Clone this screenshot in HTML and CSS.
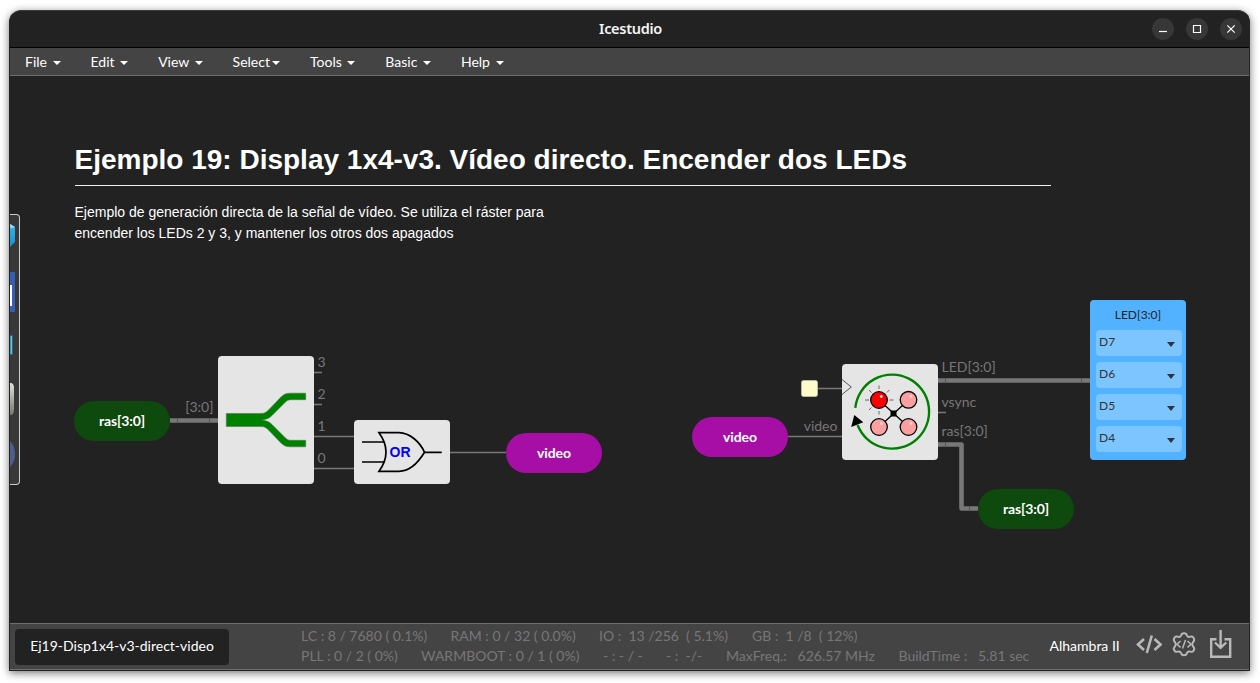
FILE: index.html
```html
<!DOCTYPE html>
<html lang="es">
<head>
<meta charset="utf-8">
<title>Icestudio</title>
<link rel="stylesheet" href="styles.css">
</head>
<body>
<div class="window">
  <header class="titlebar">
    <span class="side"></span>
    <span class="title">Icestudio</span>
    <div class="side controls">
      <svg width="22" height="22"><circle cx="11" cy="11" r="11"/><path d="M7 13.5h8"/></svg>
      <svg width="22" height="22"><circle cx="11" cy="11" r="11"/><path d="M7.5 7.5h7v7h-7z"/></svg>
      <svg width="22" height="22"><circle cx="11" cy="11" r="11"/><path d="M7.3 7.3l7.4 7.4M14.7 7.3l-7.4 7.4"/></svg>
    </div>
  </header>
  <nav class="menubar">
    <span class="menu">File <i class="caret"></i></span>
    <span class="menu">Edit <i class="caret"></i></span>
    <span class="menu">View <i class="caret"></i></span>
    <span class="menu">Select<i class="caret"></i></span>
    <span class="menu">Tools <i class="caret"></i></span>
    <span class="menu">Basic <i class="caret"></i></span>
    <span class="menu">Help <i class="caret"></i></span>
  </nav>
  <main class="canvas">
    <section class="note">
      <h1>Ejemplo 19: Display 1x4-v3. Vídeo directo. Encender dos LEDs</h1>
      <p>Ejemplo de generación directa de la señal de vídeo. Se utiliza el ráster para<br>encender los LEDs 2 y 3, y mantener los otros dos apagados</p>
    </section>

    <svg class="diagram" viewBox="10 76 1239 547" width="1239" height="547">
      <g class="bus">
        <path d="M170 420.5H218"/>
        <path d="M938 380.5H1090"/>
        <path d="M938 444.5H961.5V508.5H978"/>
      </g>
      <g class="wire">
        <path d="M314 372.5h8M314 404.5h8M314 436.5h40M314 468.5h40M450 452.5h56M788 436.5h54M818 388.5h24M938 412.5h8"/>
      </g>
      <g class="joint">
        <path d="M177.500 418v5M209.500 418v5M945.500 378v5M1081.500 378v5M945.500 442v5M969.500 506v5"/>
      </g>
      <g class="block">
        <rect x="218" y="356" width="96" height="128" rx="4"/>
        <rect x="354" y="420" width="96" height="64" rx="4"/>
        <rect x="842" y="364" width="96" height="96" rx="4"/>
      </g>
      <rect class="clock" x="801.500" y="380.500" width="16" height="16" rx="2"/>
      <path class="clock-port" d="M842 379.500L851.300 387L842 394.500"/>

      <path class="splitter" d="M226.300 413.500H261C265 413.500 267 411.500 269 409.500L281 397C284 394.200 286 393.200 290 393.200H305.700V399.700H291C288.500 399.700 287 400.500 285.500 402L272.500 415C269 418.500 267 419.200 262 420C267 420.800 269 421.500 272.500 425L285.500 438C287 439.500 288.500 440.300 291 440.300H305.700V446.800H290C286 446.800 284 445.800 281 443L269 430.500C267 428.500 265 426.500 261 426.500H226.300Z"/>

      <g class="gate">
        <path d="M379 432.700H399C410 433 420 442 424.500 452.300C418 463 409 471.300 399 471.300H379Q393 452 379 432.700Z"/>
        <path d="M362 442H384.500M362 462H384.500M424.500 452.300H441.700"/>
        <text x="389.600" y="456.800">OR</text>
      </g>

      <path class="sweep" d="M855.300 407.800A37 37 0 1 1 857.600 425"/>
      <path d="M854.300 415L863.300 422.300L851.200 427Z"/>
      <path class="rays" d="M879 385.500v3.500M879 411v3.500M865 400h4M889.500 400h4M869 390l2.500 2.500M889.300 390l-2.500 2.500M869 410l2.500-2.500"/>
      <g class="leds">
        <path d="M879 400L908.500 427M908.500 400L879 427"/>
        <circle class="on" cx="879" cy="400" r="8.300"/>
        <circle cx="908.500" cy="399.800" r="8.300"/>
        <circle cx="879" cy="427" r="8.300"/>
        <circle cx="908.500" cy="427" r="8.300"/>
      </g>
      <rect x="890.500" y="410.500" width="6" height="6"/>
      <g class="glints">
        <circle cx="881.300" cy="396.500" r="1.400"/><circle cx="911" cy="396.300" r="1.400"/>
        <circle cx="881.500" cy="423.500" r="1.400"/><circle cx="911" cy="423.500" r="1.400"/>
      </g>

      <g class="labels">
        <text x="185.200" y="412">[3:0]</text>
        <text x="317.500" y="367">3</text>
        <text x="317.500" y="399">2</text>
        <text x="317.500" y="431">1</text>
        <text x="317.500" y="463">0</text>
        <text x="803.700" y="431">video</text>
        <text x="941.500" y="372">LED[3:0]</text>
        <text x="941.500" y="407">vsync</text>
        <text x="941.500" y="436">ras[3:0]</text>
      </g>
    </svg>

    <div class="pill green ras-in">ras[3:0]</div>
    <div class="pill purple video-out">video</div>
    <div class="pill purple video-in">video</div>
    <div class="pill green ras-out">ras[3:0]</div>

    <div class="pins">
      <div class="pins-title">LED[3:0]</div>
      <div class="pin">D7<i></i></div>
      <div class="pin">D6<i></i></div>
      <div class="pin">D5<i></i></div>
      <div class="pin">D4<i></i></div>
    </div>

    <aside class="dock">
      <svg width="9" height="269" viewBox="10 215 9 269">
        <defs>
          <linearGradient id="cube" x2="0" y2="1"><stop offset="0" stop-color="#35b5ea"/><stop offset="1" stop-color="#1290d2"/></linearGradient>
          <linearGradient id="metal" x2="0" y2="1"><stop offset="0" stop-color="#e0e0dc"/><stop offset="1" stop-color="#77776f"/></linearGradient>
        </defs>
        <path d="M10 224L15 227V242L10 247Z" fill="url(#cube)"/>
        <path d="M10 224L15 227L11.500 228.500L10 227Z" fill="#9adcf6"/>
        <path d="M10 272h5v40h-5z" fill="#335fb5"/>
        <path d="M10 285h2v21h-2z" fill="#fff"/>
        <path d="M10 335.500h2.500v19h-2.500z" fill="#5ec8e4" stroke="#23677c"/>
        <path d="M10 383C13 383 14 385 14 388V409C14 413 13 415 10 415Z" fill="url(#metal)"/>
        <path d="M10 441Q15 446 15 454T10 467Z" fill="#4b5f8d"/>
      </svg>
    </aside>
  </main>
  <footer class="statusbar">
    <div class="tab">Ej19-Disp1x4-v3-direct-video</div>
    <div class="stats">
      <div class="row">
        <span class="w150">LC : 8 / 7680 ( 0.1%)</span><span class="w148">RAM : 0 / 32 ( 0.0%)</span><span class="w153">IO :&nbsp; 13 /256&nbsp; ( 5.1%)</span><span>GB :&nbsp; 1 /8&nbsp; ( 12%)</span>
      </div>
      <div class="row">
        <span class="w120">PLL : 0 / 2 ( 0%)</span><span class="w182">WARMBOOT : 0 / 1 ( 0%)</span><span class="w63">- : - / -</span><span class="w60">- :&nbsp; -/-</span><span class="w172">MaxFreq.:&nbsp;&nbsp; 626.57 MHz</span><span>BuildTime :&nbsp;&nbsp; 5.81 sec</span>
      </div>
    </div>
    <div class="board">Alhambra II</div>
    <div class="tools">
      <svg width="26" height="28" viewBox="1136 630 26 28"><path d="M1144 639l-6 5.500l6 5.500M1154.500 639l6 5.500l-6 5.500M1151.800 635.500l-5 17.500" stroke-width="2.600"/></svg>
      <svg width="26" height="28" viewBox="1171 630 26 28">
        <path d="M1181.200 635.300Q1181.400 633.200 1184 633.200T1186.800 635.300Q1188 637.700 1190.500 636.700Q1192.600 636 1193.800 638.200Q1195 640.300 1193.200 641.700Q1191.300 644.200 1193.200 646.700Q1195 648.100 1193.800 650.200Q1192.600 652.400 1190.500 651.700Q1188 650.700 1186.800 653.100Q1186.600 655.200 1184 655.200T1181.200 653.100Q1180 650.700 1177.500 651.700Q1175.400 652.400 1174.200 650.200Q1173 648.100 1174.800 646.700Q1176.700 644.200 1174.800 641.700Q1173 640.300 1174.200 638.200Q1175.400 636 1177.500 636.700Q1180 637.700 1181.200 635.300Z" stroke-width="1.900"/>
        <path d="M1180.500 641l-3.500 3.200l3.500 3.200M1187.500 641l3.500 3.200l-3.500 3.200M1185.500 640l-3 8.500" stroke-width="1.500"/>
      </svg>
      <svg width="22" height="28" viewBox="1210 630 22 28"><path d="M1216.500 639.200H1211.200V656.800H1230.200V639.200H1224.500M1220.600 630V647.500M1215 642.500l5.600 5.300l5.600-5.300" stroke-width="2.400"/></svg>
    </div>
  </footer>
</div>
</body>
</html>
```

FILE: styles.css
```css
* { box-sizing: border-box; }
body {
  margin: 0;
  width: 1260px;
  height: 683px;
  padding: 10px 10px 12px 9px;
  overflow: hidden;
  background: #fff;
  font: 14px/20px Lato, sans-serif;
  color: #fff;
}
.window {
  display: flex;
  flex-direction: column;
  height: 661px;
  border: 1px solid #242424;
  border-top-color: #3a3d3d;
  border-radius: 12px 12px 0 0;
  background: #222;
  box-shadow: 0 2px 8px rgba(0, 0, 0, .55);
}
.titlebar {
  display: flex;
  align-items: center;
  justify-content: space-between;
  height: 37px;
  padding: 0 7px 0 9px;
  border-bottom: 1px solid #000;
}
.side { width: 92px; }
.title {
  padding-bottom: 2px;
  font: 600 14.5px/20px "Noto Sans", sans-serif;
  letter-spacing: -.3px;
  color: #f4f4f4;
}
.controls { display: flex; justify-content: flex-end; gap: 12px; }
.controls circle { fill: #373737; }
.controls path { fill: none; stroke: #fff; stroke-width: 1.2; }
.menubar {
  display: flex;
  height: 28px;
  background: #444;
  border-bottom: 1px solid #6d6f6e;
}
.menu { padding: 4px 15px; white-space: pre; }
.caret {
  display: inline-block;
  margin-left: 2px;
  vertical-align: middle;
  border: 4px solid transparent;
  border-top-color: #fff;
  border-bottom: 0;
}
.canvas { position: relative; height: 547px; overflow: hidden; background: #222; }
.note {
  position: absolute;
  left: 64.5px;
  top: 66px;
  width: 976.5px;
  font-family: "Liberation Sans", Arial, sans-serif;
}
.note h1 {
  margin: 0;
  height: 44px;
  border-bottom: 1px solid #eee;
  font-size: 28px;
  line-height: 35px;
  white-space: nowrap;
}
.note p { margin: 16px 0 0; line-height: 21px; }
.diagram { position: absolute; left: 0; top: 0; }
.bus path { fill: none; stroke: #777; stroke-width: 4.600; stroke-linejoin: round; }
.wire path { fill: none; stroke: #777; stroke-width: 1.600; }
.joint path { stroke: #555; stroke-width: 1; }
.block rect { fill: #e5e5e5; }
.clock { fill: #fdfbcc; stroke: #b9b8a0; }
.clock-port { fill: none; stroke: #555; }
.splitter { fill: #008000; stroke: #4f774f; stroke-width: .6; }
.gate path { fill: none; stroke: #000; stroke-width: 1.700; }
.gate text { font: bold 14px "Liberation Sans", Arial, sans-serif; fill: #00f; }
.sweep { fill: none; stroke: #008000; stroke-width: 2.400; }
.rays { fill: none; stroke: #666; stroke-width: 1; }
.leds path { stroke: #000; stroke-width: 1.300; }
.leds circle { fill: #faa0a0; stroke: #000; stroke-width: 1.300; }
.leds .on { fill: #f00; }
.glints { fill: #ffd5d5; }
.labels { fill: #777; font: 14px Lato, sans-serif; }
.pill {
  position: absolute;
  width: 96px;
  height: 40px;
  border-radius: 20px;
  font-weight: 700;
  letter-spacing: -.1px;
  line-height: 40px;
  text-align: center;
}
.green { background: #0e490e; }
.purple { background: #a60ea6; }
.ras-in { left: 64px; top: 325px; }
.video-out { left: 496px; top: 357px; }
.video-in { left: 682px; top: 341px; }
.ras-out { left: 968px; top: 413px; }
.pins {
  position: absolute;
  left: 1080px;
  top: 224px;
  width: 96px;
  height: 160px;
  padding: 0 4px 0 6px;
  display: flex;
  flex-direction: column;
  gap: 6px;
  border-radius: 4px;
  background: #52b2ff;
  color: #333;
  font-size: 12px;
}
.pins-title { height: 24px; padding-right: 2px; line-height: 30px; text-align: center; color: #222; }
.pin {
  display: flex;
  justify-content: space-between;
  height: 26px;
  padding: 0 7px 0 3px;
  border-radius: 4px;
  background: #7cc5ff;
  line-height: 24px;
}
.pin i {
  margin-top: 12px;
  height: 0;
  border: 4px solid transparent;
  border-top: 5px solid #333;
  border-bottom: 0;
}
.dock {
  position: absolute;
  left: 0;
  top: 138px;
  width: 10px;
  height: 271px;
  border: 1px solid #ccc;
  border-left: 0;
  border-radius: 0 4px 4px 0;
  background: #383838;
}
.dock svg { display: block; }
.statusbar {
  display: flex;
  height: 47px;
  border-top: 1px solid #6d6f6e;
  border-bottom: 1px solid #6d6f6e;
  background: #444;
}
.tab {
  width: 214px;
  height: 36px;
  margin: 5px 72px 0 5px;
  border-radius: 4px;
  background: #222;
  line-height: 34px;
  text-align: center;
}
.stats { width: 748.5px; padding-top: 2px; color: #777; white-space: nowrap; }
.row { display: flex; height: 20px; }
.row span { flex: none; }
.w150 { width: 149.5px; }
.w148 { width: 148.5px; }
.w153 { width: 153px; }
.w120 { width: 120px; }
.w182 { width: 182px; }
.w63 { width: 63px; }
.w60 { width: 60px; }
.w172 { width: 172.5px; }
.board { width: 86.5px; line-height: 44px; white-space: nowrap; }
.tools { display: flex; gap: 9px; padding-top: 6px; }
.tools svg:last-child { margin-left: 4px; }
.tools path { fill: none; stroke: #b9b9b9; }
```
